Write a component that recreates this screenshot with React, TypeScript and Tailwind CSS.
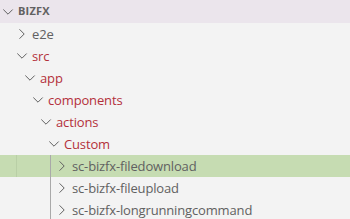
import React from "react";

const RED = "text-[#b3303b]";
const GRAY = "text-[#616161]";

function ChevronRight() {
  return (
    <svg width="16" height="16" viewBox="0 0 16 16" className="shrink-0">
      <path d="M5.8 3.6 L10.2 8 L5.8 12.4" fill="none" stroke="#616161" strokeWidth="1" strokeLinecap="round" strokeLinejoin="round" />
    </svg>
  );
}

function ChevronDown() {
  return (
    <svg width="16" height="16" viewBox="0 0 16 16" className="shrink-0">
      <path d="M3.6 5.8 L8 10.2 L12.4 5.8" fill="none" stroke="#616161" strokeWidth="1" strokeLinecap="round" strokeLinejoin="round" />
    </svg>
  );
}

type Row = { label: string; level: number; open: boolean; red: boolean; selected?: boolean; guide?: boolean };

const rows: Row[] = [
  { label: "e2e", level: 0, open: false, red: false },
  { label: "src", level: 0, open: true, red: true },
  { label: "app", level: 1, open: true, red: true },
  { label: "components", level: 2, open: true, red: true },
  { label: "actions", level: 3, open: true, red: true },
  { label: "Custom", level: 4, open: true, red: true },
  { label: "sc-bizfx-filedownload", level: 5, open: false, red: false, selected: true, guide: true },
  { label: "sc-bizfx-fileupload", level: 5, open: false, red: false, guide: true },
  { label: "sc-bizfx-longrunningcommand", level: 5, open: false, red: false, guide: true },
];

const padClasses = ["pl-[14px]", "pl-[22px]", "pl-[30px]", "pl-[38px]", "pl-[46px]", "pl-[54px]"];

export default function App() {
  return (
    <div
      className="w-[350px] h-[219px] overflow-hidden bg-[#f3f3f3]"
      style={{ fontFamily: '"Open Sans", "Noto Sans", sans-serif' }}
    >
      <div className="h-[23px] bg-[#ebe5ec] flex items-center pl-0">
        <ChevronDown />
        <span className="ml-[2px] text-[11px] font-bold text-[#616161] tracking-[0.2px]">BIZFX</span>
      </div>
      {rows.map((r) => (
        <div
          key={r.label}
          className={`relative h-[22px] flex items-center ${padClasses[r.level]} ${r.selected ? "bg-[#c6dcb2]" : ""}`}
        >
          {r.guide && <div className="absolute left-[50px] top-0 bottom-0 w-px bg-[#a9a9a9]" />}
          {r.selected && <div className="absolute left-[16px] top-0 bottom-0 w-px bg-[#b9cfa6]" />}
          {r.open ? <ChevronDown /> : <ChevronRight />}
          <span className={`ml-[2px] text-[13px] tracking-[-0.15px] leading-none ${r.red ? RED : GRAY}`}>{r.label}</span>
        </div>
      ))}
    </div>
  );
}
